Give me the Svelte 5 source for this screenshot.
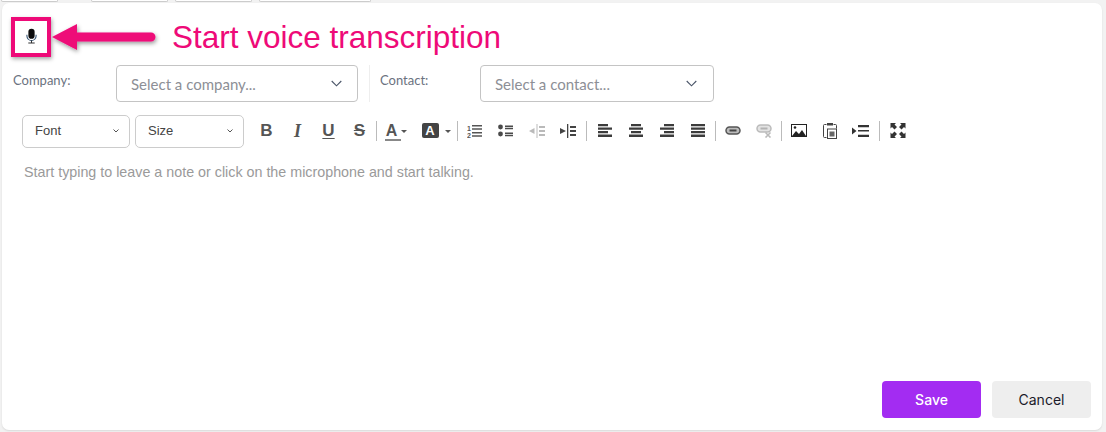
<script>
  const tabs = [57, 77, 77, 112];
</script>

<div class="page">
  <div class="tabs">
    {#each tabs as w}<span class="tab" style="width:{w}px"></span>{/each}
  </div>
  <div class="card">
    <div class="microw">
      <button class="mic" aria-label="Start voice transcription">
        <svg class="mic-icon" width="11" height="16" viewBox="0 0 12 17">
          <rect x="2.600" y="0.500" width="6.800" height="11" rx="3.400" fill="#0c0c0c"/>
          <path d="M1 7v1.500a5 5 0 0 0 10 0V7" fill="none" stroke="#2a4a6a" stroke-width="1.100"/>
          <path d="M6 13.500v2.200M2.500 16.200h7" stroke="#333" stroke-width="1.100" fill="none"/>
        </svg>
      </button>
    </div>

    <div class="fields">
      <span class="label company">Company:</span>
      <div class="select s1">
        <span>Select a company...</span>
        <svg width="11" height="7" viewBox="0 0 11 7"><path d="M.7 1l4.800 4.800L10.300 1" fill="none" stroke="#4a5568" stroke-width="1.100"/></svg>
      </div>
      <span class="divider"></span>
      <span class="label contact">Contact:</span>
      <div class="select s2">
        <span>Select a contact...</span>
        <svg width="11" height="7" viewBox="0 0 11 7"><path d="M.7 1l4.800 4.800L10.300 1" fill="none" stroke="#4a5568" stroke-width="1.100"/></svg>
      </div>
    </div>

    <div class="toolbar">
      <div class="drop d1"><span>Font</span><svg width="6" height="4" viewBox="0 0 6 4"><path d="M.5.5L3 3 5.500.5" fill="none" stroke="#555"/></svg></div>
      <div class="drop d2"><span>Size</span><svg width="6" height="4" viewBox="0 0 6 4"><path d="M.5.5L3 3 5.500.5" fill="none" stroke="#555"/></svg></div>

      <div class="tools">
        <span class="t glyph b">B</span>
        <span class="t glyph i">I</span>
        <span class="t glyph u">U</span>
        <span class="t glyph s">S</span>
        <span class="sep s-a"></span>
        <span class="t fc"><span class="glyph">A</span><i class="bar"></i><i class="caret"></i></span>
        <span class="t bc"><span class="glyph box">A</span><i class="caret"></i></span>
        <span class="sep s-b"></span>
        <span class="t"><svg width="15" height="14" viewBox="0 0 15 14" fill="#555">
          <text x="0" y="6.500" font-size="7" font-weight="700" font-family="Liberation Sans">1</text><text x="0" y="13.500" font-size="7" font-weight="700" font-family="Liberation Sans">2</text>
          <path d="M5 1h10v1.500H5zM5 4.300h10v1.500H5zM5 8h10v1.500H5zM5 11.300h10v1.500H5z"/></svg></span>
        <span class="t"><svg width="15" height="13" viewBox="0 0 15 13" fill="#4a4a4a">
          <circle cx="2.500" cy="3" r="2.400"/><circle cx="2.500" cy="10" r="2.400"/>
          <path d="M7 1.500h8V3H7zM7 3.800h8v1.500H7zM7 8.500h8V10H7zM7 10.800h8v1.500H7z"/></svg></span>
        <span class="t dim"><svg width="16" height="14" viewBox="0 0 16 14" fill="#555">
          <path d="M7.500 0h1v14h-1zM10 2h6v2h-6zM10 6h6v2h-6zM10 10h6v2h-6zM0 7l5.500-3v6z"/></svg></span>
        <span class="t"><svg width="16" height="14" viewBox="0 0 16 14" fill="#444">
          <path d="M7 0h1.300v14H7zM10 2h6v2h-6zM10 6h6v2h-6zM10 10h6v2h-6zM6 7L0 4v6z"/></svg></span>
        <span class="sep s-c"></span>
        <span class="t"><svg width="14" height="13" viewBox="0 0 14 13" fill="#3c3c3c"><path d="M0 0h10v2.300H0zM0 3.500h14v2.200H0zM0 7h10v2.200H0zM0 10.500h14V13H0z"/></svg></span>
        <span class="t"><svg width="14" height="13" viewBox="0 0 14 13" fill="#3c3c3c"><path d="M2 0h10v2.300H2zM0 3.500h14v2.200H0zM2 7h10v2.200H2zM0 10.500h14V13H0z"/></svg></span>
        <span class="t"><svg width="14" height="13" viewBox="0 0 14 13" fill="#3c3c3c"><path d="M4 0h10v2.300H4zM0 3.500h14v2.200H0zM4 7h10v2.200H4zM0 10.500h14V13H0z"/></svg></span>
        <span class="t"><svg width="14" height="13" viewBox="0 0 14 13" fill="#3c3c3c"><path d="M0 0h14v2.300H0zM0 3.500h14v2.200H0zM0 7h14v2.200H0zM0 10.500h14V13H0z"/></svg></span>
        <span class="sep s-d"></span>
        <span class="t"><svg width="16" height="9" viewBox="0 0 16 9"><rect x="1" y="1" width="14" height="7" rx="3.500" fill="#bbb" stroke="#555" stroke-width="1.500"/><path d="M4.500 4.500h7" stroke="#444" stroke-width="2"/></svg></span>
        <span class="t dim"><svg width="16" height="14" viewBox="0 0 16 14"><rect x="1" y="1" width="14" height="7" rx="3.500" fill="#bbb" stroke="#555" stroke-width="1.500"/><path d="M4.500 4.500h7" stroke="#444" stroke-width="2"/><path d="M9.500 8.500l5 5M14.500 8.500l-5 5" stroke="#555" stroke-width="1.600"/></svg></span>
        <span class="sep s-e"></span>
        <span class="t"><svg width="16" height="13" viewBox="0 0 16 13"><rect x=".5" y=".5" width="15" height="12" fill="#fff" stroke="#222"/><path d="M1 12l4-5 3 3 3-4 4 6z" fill="#222"/><circle cx="4" cy="3.500" r="1.300" fill="#222"/></svg></span>
        <span class="t"><svg width="14" height="17" viewBox="0 0 14 17"><path d="M3.500 2.500H1.500a1 1 0 0 0-1 1v11a1 1 0 0 0 1 1h2" fill="none" stroke="#444"/><path d="M10.500 2.500h2a1 1 0 0 1 1 1v3" fill="none" stroke="#444"/><rect x="4" y="1" width="6" height="2.500" fill="#444"/><rect x="4.500" y="7" width="9" height="9.500" fill="#fff" stroke="#444"/><rect x="6.500" y="9.500" width="5" height="5" fill="#666"/></svg></span>
        <span class="t"><svg width="17" height="12" viewBox="0 0 17 12" fill="#333"><path d="M0 2.500L4.500 6 0 9.500zM6 0h11v2.200H6zM6 5h11v1.500H6zM6 9.800h11V12H6z"/></svg></span>
        <span class="sep s-f"></span>
        <span class="t"><svg width="16" height="15" viewBox="0 0 15 15" fill="#333"><path d="M0 0h5.500L4 1.500 6.500 4 4 6.500 1.500 4 0 5.500zM15 0v5.500L13.500 4 11 6.500 8.500 4 11 1.500 9.500 0zM0 15V9.500L1.500 11 4 8.500 6.500 11 4 13.500 5.500 15zM15 15H9.500L11 13.500 8.500 11 11 8.500 13.500 11 15 9.500z"/></svg></span>
      </div>
    </div>

    <p class="placeholder">Start typing to leave a note or click on the microphone and start talking.</p>

    <div class="actions">
      <button class="save">Save</button>
      <button class="cancel">Cancel</button>
    </div>
  </div>

  <div class="callout-box"></div>
  <svg class="arrow" width="112" height="36" viewBox="0 0 112 36">
    <defs><filter id="sh" x="-10%" y="-30%" width="120%" height="170%"><feDropShadow dx="1" dy="2" stdDeviation="2" flood-color="#000" flood-opacity=".4"/></filter></defs>
    <path d="M2 17L27 4v8.500h74a4.500 4.500 0 0 1 0 9H27V30z" fill="#ee0a78" filter="url(#sh)"/>
  </svg>
  <span class="callout-text">Start voice transcription</span>
</div>

<style>
  :global(body) { margin: 0; background: #f2f2f2; }
  .page {
    position: relative;
    width: 1106px;
    height: 432px;
    overflow: hidden;
    background: #f2f2f2;
    font-family: "Liberation Sans", Arial, sans-serif;
  }
  .tabs {
    display: flex;
    gap: 7px;
    height: 3px;
    padding-left: 1px;
  }
  .tab {
    height: 2px;
    background: #fff;
    border: 1px solid #ccc;
    border-top: 0;
    border-radius: 0 0 4px 4px;
    box-sizing: border-box;
  }
  .tab:first-child { margin-right: 26px; }
  .card {
    box-sizing: border-box;
    height: 427px;
    margin: 0 4px 0 2px;
    background: #fff;
    border-radius: 7px;
    box-shadow: 0 1px 2px rgba(0,0,0,.1);
    display: flex;
    flex-direction: column;
  }
  .microw { height: 62px; padding: 15px 0 0 10px; box-sizing: border-box; }
  .mic {
    width: 38px;
    height: 38px;
    padding: 0 0 2px;
    border: 1px solid #ddd;
    border-radius: 4px;
    background: #fff;
    display: flex;
    align-items: center;
    justify-content: center;
  }
  .fields { display: flex; align-items: flex-start; height: 37px; }
  .label {
    font-family: Lato, sans-serif;
    font-size: 13px;
    color: #6b7280;
    line-height: 16px;
    padding-top: 7px;
  }
  .company { margin-left: 11px; width: 103px; }
  .contact { width: 100px; }
  .select {
    box-sizing: border-box;
    height: 37px;
    border: 1px solid #c4c4c4;
    border-radius: 4px;
    display: flex;
    align-items: center;
    justify-content: space-between;
    padding: 0 15px 0 14px;
    font-family: Lato, sans-serif;
    font-size: 15px;
    color: #8d8f96;
  }
  .s1 { width: 242px; }
  .s2 { width: 234px; padding-right: 16px; }
  .divider { width: 1px; height: 37px; background: #eee; margin: 0 10px 0 11px; }
  .toolbar { display: flex; align-items: center; height: 33px; margin-top: 13px; padding-left: 20px; }
  .drop {
    box-sizing: border-box;
    height: 33px;
    border: 1px solid #ccc;
    border-radius: 5px;
    display: flex;
    align-items: center;
    justify-content: space-between;
    padding: 0 10px 2px 12px;
    font-size: 13px;
    color: #444;
  }
  .d1 { width: 108px; margin-right: 5px; }
  .d2 { width: 109px; }
  .tools { display: flex; align-items: center; height: 33px; margin-left: 7px; padding-bottom: 2px; box-sizing: border-box; }
  .t {
    position: relative;
    width: 31px;
    height: 20px;
    flex: none;
    display: flex;
    align-items: center;
    justify-content: center;
    color: #555;
    font-style: normal;
  }
  .dim { opacity: .4; }
  .glyph { font-size: 17px; font-weight: 700; line-height: 20px; color: #555; }
  .i { font-family: "Liberation Serif", serif; font-style: italic; font-size: 18px; }
  .u { text-decoration: underline; text-underline-offset: 2px; }
  .s { text-decoration: line-through; }
  .sep { width: 1px; height: 20px; background: #bbb; flex: none; }
  .s-a { margin: 0 2px 0 1px; }
  .s-b { margin: 0 1px 0 6px; }
  .s-c { margin: 0 2px 0 3px; }
  .s-d { margin: 0 1px 0 2px; }
  .s-e { margin: 0 1px 0 2px; }
  .s-f { margin: 0 2px 0 3px; }
  .fc { margin-right: 11px; width: 31px; }
  .fc .glyph { line-height: 16px; margin-right: 6px; font-size: 16px; }
  .bar { position: absolute; left: 6px; bottom: 0; width: 16px; height: 2px; background: #888; }
  .caret {
    position: absolute;
    right: 3px;
    top: 9px;
    border: 3px solid transparent;
    border-top-color: #555;
    border-bottom: 0;
  }
  .bc { width: 30px; }
  .bc .caret { right: 0; }
  .box {
    color: #fff;
    background: #444;
    border-radius: 2px;
    width: 17px;
    height: 15px;
    line-height: 16px;
    font-size: 13px;
    text-align: center;
    margin-right: 12px;
  }
  .placeholder {
    margin: 15px 0 0 22px;
    font-size: 14.300px;
    line-height: 18px;
    color: #9a9a9a;
  }
  .actions { margin-top: auto; display: flex; justify-content: flex-end; gap: 11px; padding: 0 11px 12px 0; }
  .actions button {
    width: 99px;
    height: 37px;
    border: 0;
    border-radius: 4px;
    font-family: Inter, sans-serif;
    font-size: 14px;
  }
  .save { background: #a32cf2; color: #fff; font-weight: 500; }
  .cancel { background: #eeeeee; color: #1a1a2a; }
  .callout-box {
    position: absolute;
    left: 11px;
    top: 17px;
    width: 40px;
    height: 40px;
    box-sizing: border-box;
    border: 4px solid #ee0a78;
    box-shadow: 1px 2px 4px rgba(0,0,0,.35);
  }
  .arrow { position: absolute; left: 50px; top: 20px; }
  .callout-text {
    position: absolute;
    left: 172px;
    top: 19px;
    font-size: 31.500px;
    line-height: 36px;
    color: #ee0a78;
    white-space: nowrap;
  }
</style>
